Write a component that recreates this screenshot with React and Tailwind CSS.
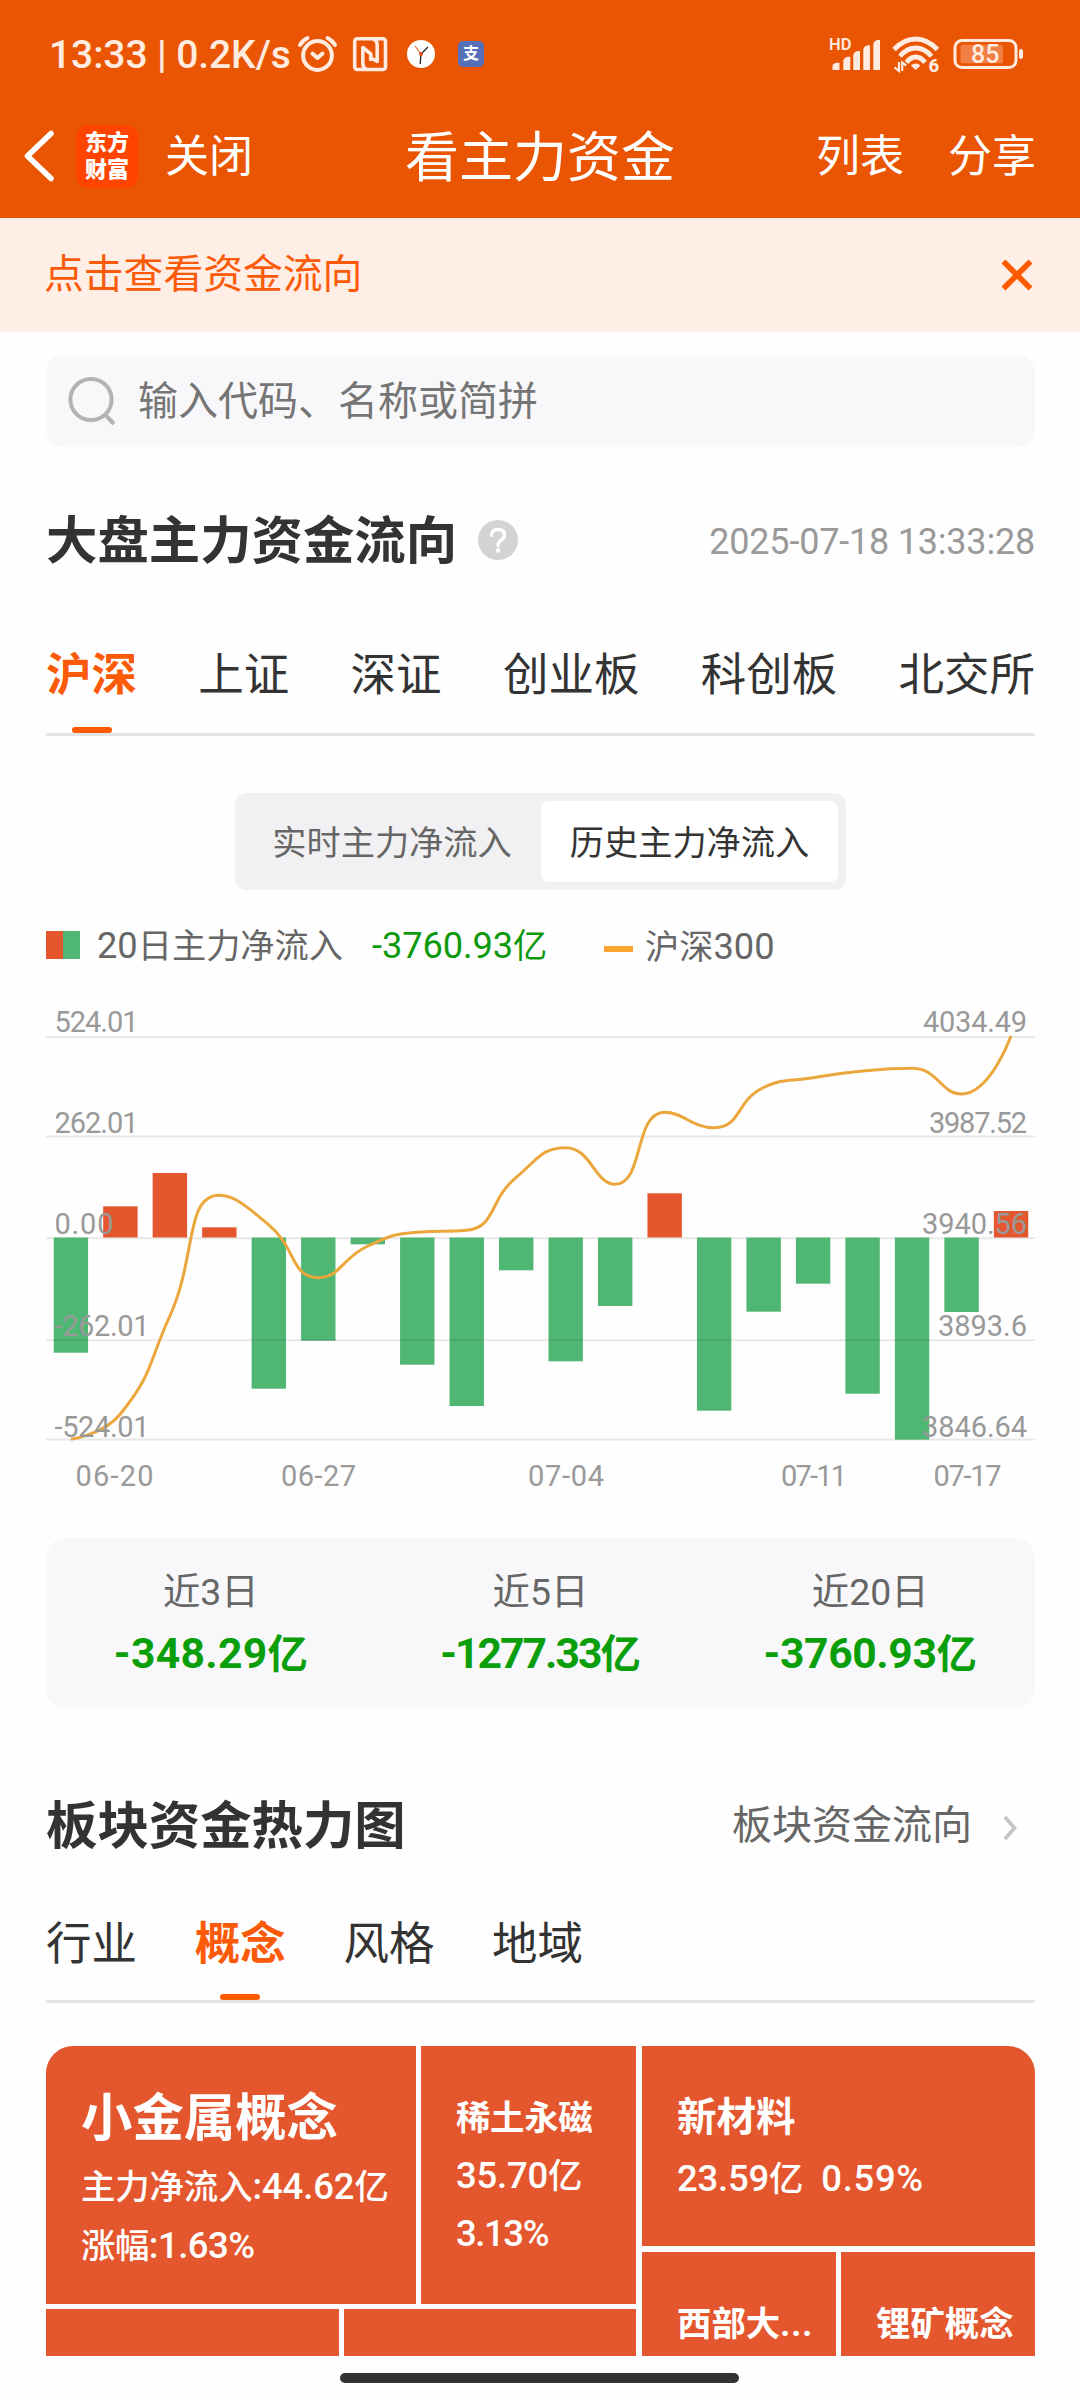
import { useState } from 'react'

const MARKETS = ['沪深', '上证', '深证', '创业板', '科创板', '北交所']
const BOARDS = ['行业', '概念', '风格', '地域']

const SUMMARY = [
  { label: '近3日', value: '-348.29', tracking: 'tracking-[0.3px]' },
  { label: '近5日', value: '-1277.33', tracking: 'tracking-[-2px]' },
  { label: '近20日', value: '-3760.93', tracking: 'tracking-[-0.4px]' },
]

// chart geometry, in page pixels
const ZERO_Y = 1237.5
const FIRST_X = 53.7
const STEP = 49.48
const BAR_W = 34.4

const BAR_ENDS = [
  1352.7, 1206.3, 1173, 1227.3, 1388.7, 1340.7, 1244.3, 1364.7, 1406, 1270.3,
  1361.3, 1306, 1193.3, 1410.7, 1311.7, 1283.7, 1393.7, 1439.7, 1312, 1211,
]

const INDEX_Y = [
  1439.3, 1414, 1316, 1195.3, 1224.8, 1277.7, 1246, 1232.3, 1230.3, 1177.3,
  1147.7, 1184.3, 1112.3, 1127.7, 1087.5, 1077.7, 1071, 1068.3, 1094, 1036,
]

const LEFT_LABELS = [
  { text: '524.01', y: 1032, w: 84 },
  { text: '262.01', y: 1133, w: 84 },
  { text: '0.00', y: 1234.3, w: 59 },
  { text: '-262.01', y: 1335.7, w: 95 },
  { text: '-524.01', y: 1437, w: 95 },
]

const RIGHT_LABELS = [
  { text: '4034.49', y: 1032, w: 104 },
  { text: '3987.52', y: 1133, w: 98 },
  { text: '3940.56', y: 1234.3, w: 105 },
  { text: '3893.6', y: 1335.7, w: 89 },
  { text: '3846.64', y: 1437, w: 105 },
]

const DATES = [
  { text: '06-20', x: 75.5, w: 78 },
  { text: '06-27', x: 281, w: 75 },
  { text: '07-04', x: 528, w: 76 },
  { text: '07-11', x: 781, w: 66 },
  { text: '07-17', x: 933.5, w: 68 },
]

const clamp = (v, a, b) => Math.max(Math.min(v, Math.max(a, b)), Math.min(a, b))

// cubic smoothing that never overshoots the neighbouring points
function smoothPath(points, smooth = 0.5) {
  let d = `M${points[0].x} ${points[0].y}`
  let c0 = points[0]

  for (let i = 1; i < points.length; i++) {
    const p = points[i]
    const prev = points[i - 1]
    const next = points[i + 1]
    let c1 = p
    let nextC0 = p

    if (next) {
      const lenPrev = Math.hypot(p.x - prev.x, p.y - prev.y)
      const lenNext = Math.hypot(next.x - p.x, next.y - p.y)
      const ratio = lenNext / (lenNext + lenPrev)
      const nx = clamp(p.x + (next.x - prev.x) * smooth * ratio, p.x, next.x)
      const ny = clamp(p.y + (next.y - prev.y) * smooth * ratio, p.y, next.y)

      c1 = {
        x: clamp(p.x - ((nx - p.x) * lenPrev) / lenNext, prev.x, p.x),
        y: clamp(p.y - ((ny - p.y) * lenPrev) / lenNext, prev.y, p.y),
      }
      nextC0 = {
        x: p.x + ((p.x - c1.x) * lenNext) / lenPrev,
        y: p.y + ((p.y - c1.y) * lenNext) / lenPrev,
      }
    }

    d += `C${c0.x} ${c0.y} ${c1.x} ${c1.y} ${p.x} ${p.y}`
    c0 = nextC0
  }

  return d
}

const INDEX_PATH = smoothPath(
  INDEX_Y.map((y, i) => ({ x: FIRST_X + BAR_W / 2 + i * STEP, y }))
)

export default function App() {
  const [market, setMarket] = useState('沪深')
  const [board, setBoard] = useState('概念')

  return (
    <div className="h-[2400px] w-[1080px] overflow-hidden bg-[#fefefe] font-['Roboto','Noto_Sans_CJK_SC',sans-serif] text-[#333]">
      <header className="h-[218px] bg-[#ea5504] text-white">
        <StatusBar />
        <NavBar />
      </header>

      <div className="flex h-[114px] items-center justify-between bg-[#ffeee6] pl-[44px] pr-[47px] text-[#fb5a08]">
        <span className="text-[39.8px] leading-none">点击查看资金流向</span>
        <svg className="h-[32px] w-[32px]" viewBox="0 0 32 32" fill="none" stroke="#ff5a00" strokeWidth="5.6">
          <path d="M2.5 2.5 29.5 29.5M29.5 2.5 2.5 29.5" />
        </svg>
      </div>

      <main className="pl-[46px] pr-[45px]">
        <div className="mt-[23px] flex h-[92px] items-center rounded-[17px] bg-[#f8f8fa] pl-[22px]">
          <svg className="h-[50px] w-[50px]" viewBox="0 0 50 50" fill="none" stroke="#b3b3b3" strokeWidth="4">
            <circle cx="23" cy="23.5" r="20.6" />
            <path d="m37 38.5 9 9.5" />
          </svg>
          <span className="ml-[20px] pt-[2px] text-[40px] leading-none text-[#757575]">输入代码、名称或简拼</span>
        </div>

        <div className="mt-[53px] flex h-[80px] items-center">
          <h2 className="pt-[4px] text-[51.4px] font-bold leading-none">大盘主力资金流向</h2>
          <HelpIcon />
          <span className="ml-auto pt-[3px] text-[36px] leading-none tracking-[-0.2px] text-[#999]">2025-07-18 13:33:28</span>
        </div>

        <div className="mt-[34px] flex h-[122px] justify-between border-b-[3px] border-[#e5e5e5]">
          {MARKETS.map((name) => (
            <Tab key={name} name={name} active={name === market} onClick={() => setMarket(name)} />
          ))}
        </div>

        <div className="mx-auto mt-[57px] flex h-[97px] w-[611px] rounded-[12px] bg-[#f1f1f4] p-[8px] text-[34.2px] leading-none">
          <button className="flex-1 pt-[3px] text-[#666]">实时主力净流入</button>
          <button className="w-[297px] rounded-[8px] bg-white pt-[3px] text-[#333]">历史主力净流入</button>
        </div>

        <div className="mt-[27px] flex h-[56px] items-center text-[34.2px] leading-none text-[#666]">
          <span className="flex h-[28px] w-[34px]">
            <span className="flex-1 bg-[#e4572e]" />
            <span className="flex-1 bg-[#50b674]" />
          </span>
          <span className="ml-[17px] w-[275px] whitespace-nowrap pt-[2px]">
            <Num>20</Num>日主力净流入
          </span>
          <span className="w-[232px] whitespace-nowrap pt-[2px] tracking-[-0.1px] text-[#0c9a0c]">
            <Num>-3760.93</Num>亿
          </span>
          <span className="mt-[8px] h-[6px] w-[29px] bg-[#fba42f]" />
          <span className="ml-[12px] mt-[5px] whitespace-nowrap">
            沪深<Num>300</Num>
          </span>
        </div>

        <FlowChart />

        <div className="mt-[30px] grid h-[171px] grid-cols-3 rounded-[20px] bg-[#f8f8fa] pt-[27px] text-center">
          {SUMMARY.map(({ label, value, tracking }) => (
            <div key={label}>
              <p className="text-[37.4px] leading-[54px] text-[#666]">{label}</p>
              <p className="mt-[3px] text-[40.3px] font-bold leading-[62px] text-[#0a9f0a]">
                <span className={tracking}>
                  <Num>{value}</Num>
                </span>
                亿
              </p>
            </div>
          ))}
        </div>

        <div className="mt-[76px] flex h-[80px] items-center justify-between">
          <h2 className="pt-[4px] text-[51.4px] font-bold leading-none">板块资金热力图</h2>
          <div className="flex items-center pr-[18px] pt-[2px] text-[40px] leading-none text-[#666]">
            板块资金流向
            <svg className="ml-[31px] mt-[4px] h-[26px] w-[14px]" viewBox="0 0 14 26" fill="none" stroke="#c4c4c4" strokeWidth="3.6">
              <path d="m2 2 9.500 11L2 24" />
            </svg>
          </div>
        </div>

        <div className="mt-[19px] flex h-[119px] gap-[57.700px] border-b-[3px] border-[#e5e5e5]">
          {BOARDS.map((name) => (
            <Tab key={name} name={name} active={name === board} onClick={() => setBoard(name)} />
          ))}
        </div>

        <HeatMap />
      </main>

      <div className="ml-[340px] mt-[17px] h-[10px] w-[399px] rounded-full bg-[#333]" />
    </div>
  )
}

// digits are drawn a touch larger than the characters beside them
function Num({ children }) {
  return <span className="text-[1.06em]">{children}</span>
}

function Tab({ name, active, onClick }) {
  return (
    <button
      onClick={onClick}
      className={[
        'relative h-full pt-[5px] text-[45.5px] leading-none',
        active ? 'font-bold text-[#fb5a08]' : 'text-[#333]',
      ].join(' ')}
    >
      {name}
      {active && (
        <span className="absolute bottom-0 left-1/2 h-[6px] w-[40px] -translate-x-1/2 rounded-full bg-[#ff5a00]" />
      )}
    </button>
  )
}

function StatusBar() {
  return (
    <div className="flex h-[108px] items-center pl-[49px] text-[#ffebdf]">
      <span className="w-[248px] whitespace-nowrap pt-[2px] text-[39px] font-medium leading-none tracking-[-0.1px]">
        13:33 | 0.2K/s
      </span>

      <svg className="h-[40px] w-[42px]" viewBox="297 34 42 40" fill="none" stroke="currentColor" strokeWidth="4" strokeLinecap="round" strokeLinejoin="round">
        <circle cx="317.500" cy="55.500" r="14.400" />
        <path d="M300 45q2.500-4.500 7.500-7M335 45q-2.500-4.500-7.500-7M312.500 53.500l5 4.500 5-4.500" />
      </svg>

      <svg className="ml-[13px] h-[36px] w-[36px]" viewBox="352 36 36 36" fill="none" stroke="currentColor" strokeWidth="3.600" strokeLinejoin="round">
        <rect x="354.700" y="38.700" width="30.800" height="30.800" rx="2.500" />
        <path d="M366 69q-3.200-1.500-3.200-6V47.500l8 6.500V61" />
        <path d="M373.500 39q3.700 1.500 3.700 6v16.500l-8-4.500" />
      </svg>

      <svg className="ml-[19px] h-[28px] w-[28px]" viewBox="0 0 28 28">
        <circle cx="14" cy="14" r="14" fill="#fff" />
        <path d="m14 14-6-8" stroke="#e2763b" strokeWidth="1.200" />
        <path d="m14 14 7-7M14 13l-.8 11" stroke="#222" strokeWidth="1.300" />
        <circle cx="14" cy="14" r="2" fill="#e2501b" />
      </svg>

      <span className="ml-[23px] flex h-[26px] w-[26px] items-center justify-center rounded-[5px] bg-[#5570b8] text-[16px] font-bold leading-none text-white">
        支
      </span>

      <svg className="ml-[341px] h-[52px] w-[56px]" viewBox="825 28 56 52" fill="currentColor">
        <text x="829" y="50" fontSize="16.500" fontWeight="600">HD</text>
        <path d="M832.500 70v-4.500q1-2.500 4-2.800h3V70zM843.300 70V60.500q1-3 4-3.800h3V70zM853.300 70V54.500q1-3 4-3.500h2.700v19zM863.300 70V49q1-3 4-3.700h2.700V70zM873.300 70V44q1-3.500 4-4h2.700v30z" />
      </svg>

      <svg className="ml-[10px] h-[46px] w-[56px]" viewBox="891 32 56 46">
        <g fill="none" stroke="currentColor" strokeWidth="4.800">
          <path d="M894 50.500Q904 40 915.700 40T937.400 50.500" />
          <path d="M900 57.200Q907 49 915.700 49T931.500 57.200" />
          <path d="M906.500 63.500Q910.500 58 915.700 58T925 63.500" />
        </g>
        <path d="M910.800 66.500q4.900-4 9.800 0l-4.900 4.500z" fill="currentColor" />
        <path d="M899 63v9l-4.500-3.600M902.200 72v-8.500l4 3" fill="none" stroke="currentColor" strokeWidth="2.200" />
        <text x="928.500" y="72.500" fontSize="18.500" fontWeight="800" fill="currentColor">6</text>
      </svg>

      <svg className="ml-[5px] h-[32px] w-[72px]" viewBox="952 38 72 32">
        <rect x="955" y="40.500" width="61" height="27" rx="7" fill="none" stroke="currentColor" strokeWidth="3" />
        <rect x="960.500" y="44.700" width="42.500" height="18.500" rx="2" fill="#f28044" />
        <rect x="1019" y="49" width="4" height="10" rx="2" fill="currentColor" />
        <text x="971" y="63" fontSize="25" fontWeight="500" fill="currentColor">85</text>
      </svg>
    </div>
  )
}

function NavBar() {
  return (
    <nav className="relative flex h-[96px] items-center pl-[22px] text-[44px] leading-none">
      <svg className="h-[52px] w-[34px]" viewBox="0 0 34 52" fill="none" stroke="#fff" strokeWidth="5.600" strokeLinecap="round" strokeLinejoin="round">
        <path d="M29 3.500 5.500 26 29 48.500" />
      </svg>
      <span className="ml-[20px] flex h-[63px] w-[62px] flex-col items-center justify-center rounded-[12px] bg-[#ff4400] text-[22px] font-black leading-[27px]">
        <span>东方</span>
        <span>财富</span>
      </span>
      <span className="ml-[27px] pt-[2px]">关闭</span>
      <h1 className="absolute left-1/2 -translate-x-1/2 pt-[5px] text-[54px]">看主力资金</h1>
      <span className="ml-auto pt-[2px]">列表</span>
      <span className="ml-[44px] mr-[44px] pt-[2px]">分享</span>
    </nav>
  )
}

function HelpIcon() {
  return (
    <svg className="ml-[21px] h-[40px] w-[40px]" viewBox="0 0 40 40">
      <circle cx="20" cy="20" r="20" fill="#d3d3d5" />
      <path d="M13.500 15.500q0-6 6.500-6t6.500 5.500q0 3-3.300 5.200-3.200 2-3.200 5.300" fill="none" stroke="#fff" strokeWidth="3.400" strokeLinecap="round" />
      <circle cx="20" cy="30.500" r="2.400" fill="#fff" />
    </svg>
  )
}

function FlowChart() {
  return (
    <svg className="h-[535px] w-[989px]" viewBox="46 973 989 535">
      <g stroke="#e8e8e8" strokeWidth="2">
        <path d="M46 1037H1035M46 1136.500H1035M46 1238.300H1035M46 1439.500H1035" />
      </g>

      {BAR_ENDS.map((y, i) => (
        <rect
          key={i}
          x={FIRST_X + i * STEP}
          y={Math.min(y, ZERO_Y)}
          width={BAR_W}
          height={Math.abs(y - ZERO_Y)}
          fill={y < ZERO_Y ? '#e4572e' : '#50b674'}
        />
      ))}

      <path d="M46 1340.300H1035" stroke="#000" strokeOpacity="0.1" strokeWidth="1.600" />
      <path d={INDEX_PATH} fill="none" stroke="#eba63c" strokeWidth="3" />

      <g fill="#999" fontSize="29">
        {LEFT_LABELS.map(({ text, y, w }) => (
          <text key={text} x="54.500" y={y} textLength={w}>{text}</text>
        ))}
        {RIGHT_LABELS.map(({ text, y, w }) => (
          <text key={text} x={1027 - w} y={y} textLength={w}>{text}</text>
        ))}
        {DATES.map(({ text, x, w }) => (
          <text key={text} x={x} y="1486" textLength={w}>{text}</text>
        ))}
      </g>
    </svg>
  )
}

function HeatMap() {
  return (
    <div className="mt-[43px] flex h-[310px] gap-[6px] overflow-hidden rounded-t-[27px] text-[34.4px] font-medium text-white">
      <div className="flex w-[590px] flex-col gap-[5px]">
        <div className="flex h-[258px] gap-[5px]">
          <div className="w-[370px] whitespace-nowrap bg-[#e4572e] pl-[35px] pt-[37px]">
            <p className="text-[51.4px] font-bold leading-[72px]">小金属概念</p>
            <p className="leading-[63px] tracking-[-0.1px]">
              主力净流入<Num>:44.62</Num>亿
            </p>
            <p className="leading-[53px] tracking-[-0.5px]">
              涨幅<Num>:1.63%</Num>
            </p>
          </div>
          <div className="flex-1 bg-[#e4572e] pl-[35px] pt-[43px]">
            <p className="font-bold leading-[58px] tracking-[-0.3px]">稀土永磁</p>
            <p className="leading-[58px] tracking-[-0.2px]">
              <Num>35.70</Num>亿
            </p>
            <p className="leading-[58px] tracking-[-1.4px]">
              <Num>3.13%</Num>
            </p>
          </div>
        </div>
        <div className="flex flex-1 gap-[5px]">
          <div className="flex-1 bg-[#e4572e]" />
          <div className="flex-1 bg-[#e4572e]" />
        </div>
      </div>

      <div className="flex flex-1 flex-col gap-[6px]">
        <div className="h-[200px] bg-[#e4572e] pl-[35px] pt-[42px]">
          <p className="text-[39.5px] font-bold leading-[60px]">新材料</p>
          <p className="flex gap-[18px] leading-[62px]">
            <span className="tracking-[-0.2px]">
              <Num>23.59</Num>亿
            </span>
            <span className="tracking-[0.7px]">
              <Num>0.59%</Num>
            </span>
          </p>
        </div>
        <div className="flex flex-1 gap-[5px] font-bold">
          <p className="flex-1 bg-[#e4572e] pl-[35px] pt-[46px] leading-[52px]">
            西部大<span className="tracking-[1px]">...</span>
          </p>
          <p className="flex-1 bg-[#e4572e] pl-[35px] pt-[46px] leading-[52px]">锂矿概念</p>
        </div>
      </div>
    </div>
  )
}
